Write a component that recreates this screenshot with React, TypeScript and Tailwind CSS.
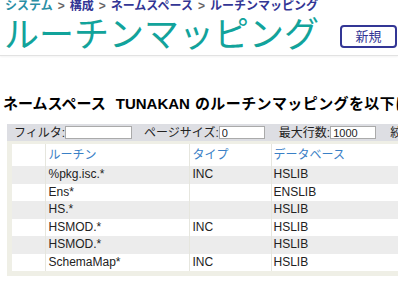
const font = "font-['Liberation_Sans','Noto_Sans_CJK_JP',sans-serif]";

const rows = [
  { routine: '%pkg.isc.*', type: 'INC', db: 'HSLIB' },
  { routine: 'Ens*', type: '', db: 'ENSLIB' },
  { routine: 'HS.*', type: '', db: 'HSLIB' },
  { routine: 'HSMOD.*', type: 'INC', db: 'HSLIB' },
  { routine: 'HSMOD.*', type: '', db: 'HSLIB' },
  { routine: 'SchemaMap*', type: 'INC', db: 'HSLIB' },
];

function Breadcrumb() {
  return (
    <div className="flex items-center gap-[5px] pl-[5px] text-[12px] leading-[13px] font-bold text-[#333695] whitespace-nowrap">
      <span className="text-[#2a8fa6]">システム</span>
      <span className="text-[#666]">&gt;</span>
      <span>構成</span>
      <span className="text-[#666]">&gt;</span>
      <span>ネームスペース</span>
      <span className="text-[#666]">&gt;</span>
      <span>ルーチンマッピング</span>
    </div>
  );
}

export default function App() {
  return (
    <div className={`${font} w-[398px] h-[282px] overflow-hidden bg-white text-[#222]`}>
      {/* Header */}
      <div className="flex h-[56px] justify-between border-b border-[#e2e2e2] shadow-[0_1px_2px_rgba(0,0,0,0.05)]">
        <div className="flex flex-col">
          <Breadcrumb />
          <h1 className="mt-[3px] pl-[4px] text-[35px] leading-[37px] font-normal text-[#12a39b] whitespace-nowrap">
            ルーチンマッピング
          </h1>
        </div>
        <button className="mt-[25px] mr-[1px] h-[23px] w-[57px] shrink-0 rounded-[4px] border-2 border-[#333695] bg-white text-[13px] text-[#333695]">
          新規
        </button>
      </div>

      <h2 className="mt-[38px] pl-[3px] text-[15px] leading-[20px] font-bold text-black whitespace-nowrap">
        <span>ネームスペース</span>
        <span className="ml-[10px]">TUNAKAN</span>
        <span className="ml-[5px] tracking-[0.4px]">のルーチンマッピングを以下に示します</span>
      </h2>

      <div className="ml-[7px] mt-[10px]">
        {/* Filter bar */}
        <div className="flex h-[17px] items-center whitespace-nowrap bg-[#dddee3] pl-[7px] text-[12px] text-[#222]">
          <span>フィルタ:</span>
          <input className="ml-[0px] h-[13px] w-[67px] border border-[#aaa] bg-white px-[2px] text-[11px]" />
          <span className="ml-[12px]">ページサイズ:</span>
          <input
            defaultValue="0"
            className="ml-[0px] h-[13px] w-[46px] border border-[#aaa] bg-white px-[2px] text-[11px] leading-[11px]"
          />
          <span className="ml-[14px]">最大行数:</span>
          <input
            defaultValue="1000"
            className="ml-[0px] h-[13px] w-[46px] border border-[#aaa] bg-white px-[2px] text-[11px] leading-[11px]"
          />
          <span className="ml-[14px]">絞り込み</span>
        </div>

        {/* Table */}
        <div className="border-[5px] border-t-[3px] border-r-0 border-[#efefe6] w-[400px]">
          <table className="w-full border-collapse text-[12px]">
            <colgroup>
              <col className="w-[33px]" />
              <col className="w-[144px]" />
              <col className="w-[82px]" />
              <col />
            </colgroup>
            <thead>
              <tr className="h-[22px] bg-white">
                <th />
                <th className="border-l border-[#e6e6de] pl-[3px] text-left font-normal text-[#3a80c6]">ルーチン</th>
                <th className="border-l border-[#e6e6de] pl-[3px] text-left font-normal text-[#3a80c6]">タイプ</th>
                <th className="border-l border-[#e6e6de] pl-[2px] text-left font-normal text-[#3a80c6]">データベース</th>
              </tr>
            </thead>
            <tbody>
              {rows.map((r, i) => (
                <tr key={i} className={i % 2 === 0 ? 'h-[17.5px] bg-[#ececec]' : 'h-[17.5px] bg-white'}>
                  <td />
                  <td className="border-l border-[#e6e6de] pl-[3px] leading-[13px]">{r.routine}</td>
                  <td className="border-l border-[#e6e6de] pl-[3px] leading-[13px]">{r.type}</td>
                  <td className="border-l border-[#e6e6de] pl-[2px] leading-[13px]">{r.db}</td>
                </tr>
              ))}
            </tbody>
          </table>
        </div>
      </div>
    </div>
  );
}
